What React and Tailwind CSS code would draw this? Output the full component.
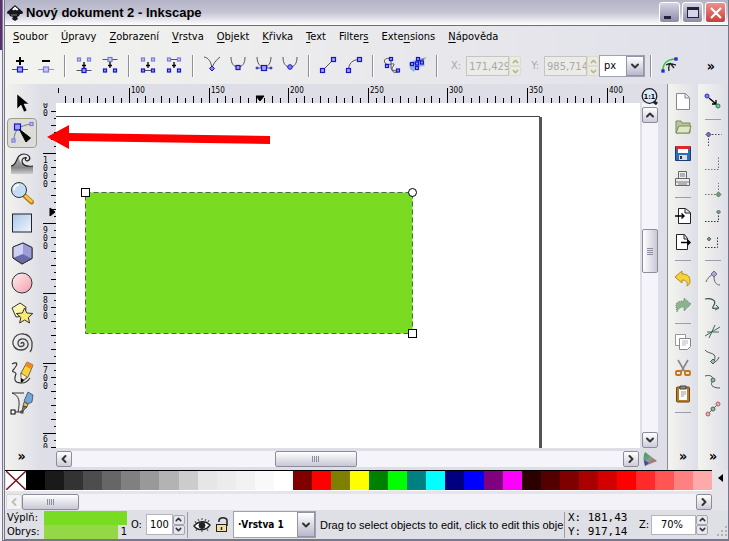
import { ChevronDown, ChevronLeft, ChevronRight, ChevronUp } from "lucide-react";

const menus = [
  ["", "S", "oubor"],
  ["", "Ú", "pravy"],
  ["", "Z", "obrazení"],
  ["", "V", "rstva"],
  ["", "O", "bjekt"],
  ["", "K", "řivka"],
  ["", "T", "ext"],
  ["Filter", "s", ""],
  ["Exte", "n", "sions"],
  ["", "N", "ápověda"],
];

const swatches = [
  "#000000", "#1a1a1a", "#333333", "#4d4d4d", "#666666", "#808080", "#999999",
  "#b3b3b3", "#cccccc", "#e6e6e6", "#ececec", "#f2f2f2", "#f9f9f9", "#ffffff",
  "#800000", "#ff0000", "#808000", "#ffff00", "#008000", "#00ff00", "#008080",
  "#00ffff", "#000080", "#0000ff", "#800080", "#ff00ff", "#2b0000", "#550000",
  "#800000", "#aa0000", "#d40000", "#ff0000", "#ff2a2a", "#ff5555", "#ff8080",
  "#ffaaaa",
];

// 24x24 drawing, one unit per pixel
function Icon({ children }) {
  return (
    <svg viewBox="0 0 24 24" className="size-6 shrink-0" fill="none" stroke="#555" aria-hidden="true">
      {children}
    </svg>
  );
}

function Node({ x, y, s = 4, soft = false }) {
  return (
    <rect
      x={x - s / 2}
      y={y - s / 2}
      width={s}
      height={s}
      fill={soft ? "#c8c8f4" : "#a0a0ff"}
      stroke={soft ? "#7a7ae0" : "#1414c8"}
      strokeWidth="1.2"
    />
  );
}

function DownArrow() {
  return <path d="M12 8v6M10 11.5h4" stroke="#000" strokeWidth="1.3" />;
}

const nodeTools = [
  [
    ["Insert node", <><path d="M4 15.5h16" /><Node x={12} y={15.5} s={5} /><path d="M8 7h8M12 3v8" stroke="#000" strokeWidth="2" /></>],
    ["Delete node", <><path d="M4 15.5h16" stroke="#999" /><Node x={12} y={15.5} s={5} soft /><path d="M8 7h8" stroke="#000" strokeWidth="2" /></>],
  ],
  [
    ["Join nodes", <><Node x={7} y={5.5} s={3} soft /><Node x={17} y={5.5} s={3} soft /><path d="M4.5 16.5h15" /><Node x={12} y={16.5} /><DownArrow /></>],
    ["Break path", <><path d="M4.5 5.5h15" /><Node x={12} y={5.5} soft /><Node x={7} y={16.5} s={3} /><Node x={17} y={16.5} s={3} /><DownArrow /></>],
  ],
  [
    ["Join with segment", <><Node x={7} y={5.5} s={3} soft /><Node x={17} y={5.5} s={3} soft /><path d="M7 16.5h10" /><Node x={7} y={16.5} s={3} /><Node x={17} y={16.5} s={3} /><DownArrow /></>],
    ["Delete segment", <><path d="M7 5.5h10" /><Node x={7} y={5.5} s={3} soft /><Node x={17} y={5.5} s={3} soft /><Node x={7} y={16.5} s={3} /><Node x={17} y={16.5} s={3} /><DownArrow /></>],
  ],
  [
    ["Make corner", <><path d="M4 3c5 1 7 5 8 11c1-4 4-8 8-11" /><path d="M12 12l2.500 2.500-2.500 2.500-2.500-2.500z" fill="#8080ff" stroke="#1414c8" /></>],
    ["Make smooth", <><path d="M5 3c0 7 3 10 7 10s7-3 7-10" /><Node x={12} y={13.5} /></>],
    ["Make symmetric", <><path d="M5 3c0 6 3 10 7 11c4-1 7-5 7-11M5 14h14" /><Node x={12} y={14} s={5} /><circle cx="5" cy="14" r="1" stroke="#1414c8" /><circle cx="19" cy="14" r="1" stroke="#1414c8" /></>],
    ["Make auto-smooth", <><path d="M5 3c0 7 3 10 7 10s7-3 7-10" /><circle cx="12" cy="13" r="2.3" fill="#8080ff" stroke="#1414c8" /></>],
  ],
  [
    ["Make line", <><path d="M6.500 16.500l11-11" /><Node x={6.5} y={16.5} /><Node x={17.5} y={5.5} /></>],
    ["Make curve", <><path d="M6.500 16.500c0-7 4-11 11-11" /><Node x={6.5} y={16.5} /><Node x={17.5} y={5.5} /></>],
  ],
  [
    ["Object to path", <><path d="M11 5c-5-2-8 1-6 4s8 0 9 1-3 3-2 6 4 3 6 2M11 5v9q0 3 7 3" /><Node x={11} y={5} s={3} /><Node x={7} y={12} s={3} /><Node x={18} y={16.5} s={3} /></>],
    ["Stroke to path", <><path d="M3 9l8-4 10-2-5 5 3 4-9 1-2 5-4-3z" fill="#8fb4d8" stroke="none" /><path d="M4 11l14-6" /><Node x={6} y={10} s={3} /><Node x={12} y={5} s={3} /><Node x={16} y={8.5} s={3} /><Node x={11} y={14} s={3} /><Node x={11} y={9.5} s={3} /></>],
  ],
];

const drawTools = [
  ["Select", <path d="M7 3v15l4-4 3 7 3-1.500-3-6.500h5z" fill="#000" stroke="#fff" strokeWidth=".5" />],
  ["Edit nodes", <><path d="M4 19C4 10 9 4 22 3" stroke="#777" /><Node x={3.5} y={19.5} s={3} soft /><Node x={21.5} y={3} s={3} soft /><Node x={7.5} y={6} s={6} /><path d="M9.500 8.500l11 8.500-4.500 4z" fill="#000" stroke="#000" /></>],
  ["Tweak", <><path d="M1 15c4 0 5-6 8-8 1 6 6 9 14 8v8H1z" fill="url(#wave)" stroke="none" /><path d="M1 15c7 0 4-12 13-12 5 0 7 4 5 6-2 2-5 0-3-2M23 15c-7 1-11-1-11-5 0-3 3-4 5-3" stroke="#222" strokeWidth="1.2" /></>],
  ["Zoom", <><path d="M15 15l6.500 6" stroke="#b77a14" strokeWidth="5" strokeLinecap="round" /><path d="M15.500 15l6 5.500" stroke="#f9c64a" strokeWidth="2.5" strokeLinecap="round" /><circle cx="9" cy="9" r="7.5" fill="#c3dcf4" stroke="#333" /><path d="M4 9a5 5 0 0 1 5-5" stroke="#fff" strokeWidth="2" /></>],
  ["Rectangle", <rect x="2.5" y="3" width="19" height="18" fill="url(#sky)" stroke="#223" />],
  ["3D box", <><path d="M3 6l10-4 9 4.500v11L12 23l-9-6z" fill="#a8a8e0" stroke="#333" /><path d="M3 6l10-4v11l-10 4z" fill="#cfcff4" stroke="none" /><path d="M3 17l10-4 9 4.500L12 23z" fill="#6a6aa8" stroke="none" /><path d="M13 2l9 4.500v11L13 13z" fill="#9c9cd8" stroke="none" /><path d="M3 6l10-4 9 4.500v11L12 23l-9-6z" stroke="#333" /></>],
  ["Ellipse", <circle cx="12" cy="12" r="10" fill="url(#pink)" stroke="#333" />],
  ["Star", <><path d="M2 7l8-5 6 4-1 9-9 1z" fill="#fdf6b0" stroke="#333" /><path d="M14.500 7l2.300 5 6 .5-4.500 4 1.300 5.500-5-3-5 3 1.300-5.500-4.500-4 6-.5z" fill="#fbe978" stroke="#333" /></>],
  ["Spiral", <path d="M11 13c0-2 3-2 3 0 0 3-6 4-6-1 0-4 6-6 9-2 3 5-1 9-6 9-6 0-9-5-8-9 1-5 6-8 11-7 6 1 9 7 8 12 0 3-1 5-2 6" stroke="#444" strokeWidth="1.3" />],
  ["Pencil", <><path d="M2 3c6-3 6 0 2 5-4 4 2 2 2 5-3 7 0 9 6 9 4 0 6-2 8-5" stroke="#333" strokeWidth="1.2" /><path d="M11 12l6-11 6 3-5 12-6 5z" fill="#fbd03c" stroke="#333" strokeWidth=".7" /><path d="M17 1l6 3-2 4-6-3z" fill="#ee8a1c" stroke="none" /><path d="M11 12l6 4-6 5z" fill="#fdf2d0" stroke="#333" strokeWidth=".6" /><path d="M11 17l3 2-3 3z" fill="#000" stroke="none" /></>],
  ["Pen", <><path d="M2 2h12M2 2c8 3 8 9 6 19M3 21h9" stroke="#333" /><rect x="1" y="19" width="4" height="4" fill="#fff" stroke="#000" /><rect x="11" y="20" width="2" height="2" fill="#fff" stroke="#000" strokeWidth=".8" /><path d="M18 1l5 3-1 7-4 2-4-3z" fill="#74a8d4" stroke="#334" strokeWidth=".7" /><path d="M14 11l4 2-1 3-4-1z" fill="#e6c04c" stroke="#333" strokeWidth=".7" /><path d="M13 15l4 1-5 5z" fill="#777" stroke="#333" strokeWidth=".7" /></>],
];

const commands = [
  ["New", <path d="M5.500 4.500h9l4 4v12h-13zM14 5v4h4" fill="#fff" stroke="#888" />],
  ["Open", <><path d="M5 6h5l1 2h8v10H5z" fill="#b9c49a" stroke="#7c8a5c" /><path d="M5 18l3-7h12l-2 7z" fill="#dfe6c6" stroke="#7c8a5c" /></>],
  ["Save", <><path d="M4.500 5.500h15v14h-15z" fill="#2f6db4" stroke="#1b3c70" /><path d="M7 6h10v6H7z" fill="#fff" stroke="none" /><path d="M5 5h14v3H5z" fill="#e02828" stroke="none" /><path d="M8 14h8v5H8z" fill="#ddd" stroke="none" /><path d="M9 15h2v3H9z" fill="#235" stroke="none" /></>],
  ["Print", <><path d="M7.500 4.500h8v7h-8zM4.500 11.500h14v7h-14z" fill="#eee" stroke="#666" /><path d="M9 7h5M9 9h5M5 15h13M7 17h9" stroke="#777" /></>],
  null,
  ["Import", <><path d="M7.500 4.500h7l5 4v11h-12zM14 5v4h5" fill="#fff" stroke="#222" /><path d="M4 12h9M10.500 9.500L13 12l-2.500 2.500" stroke="#000" strokeWidth="1.4" /></>],
  ["Export", <><path d="M5.500 4.500h8l3 4v11h-11zM13 5v4h4" fill="#fff" stroke="#222" /><path d="M10 12.500h9M16.500 10l2.500 2.500-2.500 2.500" stroke="#000" strokeWidth="1.4" /></>],
  null,
  ["Undo", <path d="M4 10l7-6v3c6 0 8 3 8 7 0 2-1 4-3 5 1-4-1-6-5-6v3z" fill="#f4d23c" stroke="#b48c10" />],
  ["Redo", <path d="M20 11l-7-6v3c-5 0-8 1-8 5l1 6c2-4 3-5 7-5v4z" fill="#8cb48c" stroke="#688c68" strokeDasharray="1 1" />],
  null,
  ["Copy", <><path d="M4.500 4.500h10v11h-10z" fill="#fff" stroke="#999" /><path d="M8.500 8.500h11v8l-3 3h-8z" fill="#fff" stroke="#888" /><path d="M11 11h6M11 13h6M11 15h4" stroke="#bbb" /></>],
  ["Cut", <><path d="M7 4l7 12M17 4l-7 12" stroke="#888" strokeWidth="1.6" /><rect x="5" y="15" width="5" height="4" rx="1" stroke="#c87414" strokeWidth="1.8" /><rect x="14" y="15" width="5" height="4" rx="1" stroke="#c87414" strokeWidth="1.8" /></>],
  ["Paste", <><rect x="5.5" y="5" width="13" height="15" rx="1" fill="#b87a28" stroke="#6e4610" /><path d="M8 7h8v11H8z" fill="#fff" stroke="none" /><path d="M9 4h6v3H9z" fill="#888" stroke="#444" /><path d="M10 10h5M10 12h5M10 14h3" stroke="#999" /></>],
  null,
];

const dots = { stroke: "#777", strokeDasharray: "1.5 1.5" };

const snaps = [
  ["Enable snapping", <><path d="M8 9l7 6M11 15l4 0v-4" stroke="#000" strokeWidth="1.3" /><circle cx="6" cy="7" r="2" fill="#8080ff" stroke="#2828c8" /><circle cx="17" cy="17" r="2" fill="#7ac8a0" stroke="#28785c" /></>],
  null,
  ["Snap bounding box", <><path d="M7.500 20V8.500h13" {...dots} stroke="#446" /><path d="M7.500 6l2.500 2.500-2.500 2.500L5 8.500z" fill="#77a" stroke="#446" /></>],
  ["Snap box edges", <path d="M4 17.500h13.500V5" {...dots} />],
  ["Snap box corners", <><path d="M4 16.500h13.500V5" {...dots} /><path d="M17.500 14l2.500 2.500-2.500 2.500-2.500-2.500z" fill="#798" stroke="#575" /></>],
  ["Snap edge midpoints", <><path d="M4 17.500h13.500V8" {...dots} stroke="#333" /><path d="M17.500 6l2 2-2 2-2-2z" fill="#798" stroke="#575" /></>],
  ["Snap box centers", <><path d="M4 17.500h12.500V6" {...dots} stroke="#333" /><path d="M8 7l2 2-2 2-2-2z" fill="#798" stroke="#575" /></>],
  null,
  ["Snap nodes", <><path d="M19 18c-4 0-6-3-6-9M5 15c1-3 4-7 8-8" stroke="#666" /><path d="M13 4l3 3-3 3-3-3z" fill="#aac" stroke="#557" strokeWidth=".8" /></>],
  ["Snap to paths", <><path d="M4 6c6-1 12 1 9 6s-1 3 4 3" stroke="#354" strokeWidth="1.2" /><path d="M15 12l3 3-4 2" stroke="#354" /></>],
  ["Snap intersections", <path d="M4 17l15-9M8 19l6-13M6 13h12" stroke="#465" />],
  ["Snap cusp nodes", <><path d="M4 5c4 5 13 1 9 12M18 12c-1 3-3 5-5 5" stroke="#555" /><path d="M12 14l2.500 2.500L12 19l-2.500-2.500z" fill="#9b9" stroke="#465" /></>],
  ["Snap smooth nodes", <><path d="M4 5c7-2 9 2 7 6s2 6 8 6" stroke="#555" /><circle cx="12" cy="9" r="2" fill="#9b9" stroke="#465" /></>],
  ["Snap midpoints", <><path d="M6 18L18 6" stroke="#555" /><circle cx="7" cy="17" r="2" fill="#eaa" stroke="#a66" /><circle cx="17" cy="7" r="2" fill="#eaa" stroke="#a66" /><circle cx="12" cy="12" r="2" fill="#9b9" stroke="#465" /></>],
];

function ToolButton({ label, children, className = "" }) {
  return (
    <button aria-label={label} className={`flex shrink-0 items-center justify-center ${className}`}>
      <Icon>{children}</Icon>
    </button>
  );
}

function VLine() {
  return <span className="mx-[5px] h-[22px] w-[2px] shrink-0 border-r border-l border-r-white border-l-[#8f8f9c]" />;
}

function Spin({ disabled = false }) {
  const tone = disabled ? "border-[#dcdccb] bg-[#ecebdf] text-[#b4b4a0]" : "border-[#a4a4b4] bg-[#e6e6ee] text-[#333]";
  return (
    <span className="flex w-3 shrink-0 flex-col">
      <button aria-label="Increase" disabled={disabled} className={`flex h-[10px] items-center justify-center rounded-xs border ${tone}`}>
        <ChevronUp size={9} strokeWidth={4} />
      </button>
      <button aria-label="Decrease" disabled={disabled} className={`flex h-[10px] items-center justify-center rounded-xs border ${tone}`}>
        <ChevronDown size={9} strokeWidth={4} />
      </button>
    </span>
  );
}

function ScrollButton({ label, icon: Glyph, disabled = false }) {
  return (
    <button
      aria-label={label}
      disabled={disabled}
      className="flex size-4 shrink-0 items-center justify-center rounded-xs border border-[#8c8c9c] bg-linear-to-b from-white to-[#ccccd8] text-[#333] disabled:border-[#d6d6cc] disabled:bg-none disabled:text-[#c0c0b0]"
    >
      <Glyph size={12} strokeWidth={4} />
    </button>
  );
}

function More() {
  return <button aria-label="More" className="shrink-0 text-[14px] leading-4 font-bold">»</button>;
}

function HRuler() {
  const ticks = [];
  for (let i = -8; i < 63; i++) {
    const x = Math.round(73 + i * 7.96) + 0.5;
    const major = i % 10 === 0;
    ticks.push(<path key={i} d={`M${x} ${major ? 4 : i % 2 ? 14 : 12}V19`} />);
  }
  return (
    <svg className="h-[19px] min-w-0 flex-1" stroke="#000" aria-hidden="true">
      <path d="M2.500 4v5" />
      {ticks}
      <path d="M200 12h8l-4 5z" fill="#000" />
      {[100, 150, 200, 250, 300, 350, 400].map((n, i) => (
        <text key={n} x={Math.round(75 + i * 79.6)} y="9" stroke="none" fontSize="8">{n}</text>
      ))}
    </svg>
  );
}

function VRuler() {
  const ticks = [];
  for (let i = -6; i < 43; i++) {
    const y = 50 + i * 7 + 0.5;
    const major = i % 10 === 0;
    ticks.push(<path key={i} d={`M${major ? 5 : i % 2 ? 16 : 13} ${y}H18`} />);
  }
  const labels = [["00", 2], ["1000", 57], ["900", 127], ["800", 197], ["700", 267], ["60", 336]];
  return (
    <svg className="h-full w-[18px] shrink-0" stroke="#000" aria-hidden="true">
      {ticks}
      <path d="M12 105v8l5-4z" fill="#000" />
      {labels.map(([text, top]) =>
        text.split("").map((d, i) => (
          <text
            key={top + i * 8}
            x="5"
            y={top + i * 8}
            dy="3"
            stroke="none"
            fontSize="8"
            className="font-['DejaVu_Sans_Mono',monospace]"
          >
            {d}
          </text>
        ))
      )}
    </svg>
  );
}

function Drawing() {
  return (
    <svg className="h-full min-w-0 flex-1 bg-white" aria-label="Canvas" role="img">
      <path d="M0 13.500h484" stroke="#444" />
      <path d="M484.500 14v400" stroke="#555" strokeWidth="3" />
      <rect x="29.5" y="89.5" width="327" height="141" fill="#7adc22" stroke="#4c6a3c" strokeDasharray="5 3" />
      <rect x="25.5" y="85.5" width="8" height="8" fill="#fff" stroke="#000" />
      <circle cx="356.5" cy="89.5" r="4" fill="#fff" stroke="#000" />
      <rect x="352.5" y="226.5" width="8" height="8" fill="#fff" stroke="#000" />
    </svg>
  );
}

function TitleBar() {
  const button = "flex size-[21px] items-center justify-center rounded-[3px] border border-white";
  return (
    <header className="flex h-[26px] shrink-0 items-center border-b border-[#6c6c7c] bg-linear-to-b from-[#b4b4c8] via-[#c4c4d4] to-white pr-[2px] pl-[2px]">
      <svg viewBox="0 0 16 16" className="size-4" aria-hidden="true">
        <path d="M8 0l8 7c0 2-1 2-3 2l-1 2-2 1 1 2-3 2-3-2 1-2-3-1-1-2C0 9 0 8 0 7z" fill="#16161c" />
        <path d="M8 1.500l3.500 3-1.500 1-2-1-1 1-2-1z" fill="#fff" />
        <path d="M4 10h6" stroke="#889" />
      </svg>
      <h1 className="ml-[3px] font-['Liberation_Sans',sans-serif] text-[13px] leading-4 font-bold">
        Nový dokument 2 - Inkscape
      </h1>
      <div className="ml-auto flex gap-[2px]">
        <button aria-label="Minimize" className={`${button} bg-linear-to-b from-[#d4d4e4] to-[#8c8ca8]`}>
          <span className="mt-[9px] mr-[5px] h-[3px] w-[7px] bg-[#22223a]" />
        </button>
        <button aria-label="Maximize" className={`${button} bg-linear-to-b from-[#d4d4e4] to-[#8c8ca8]`}>
          <span className="h-[11px] w-3 border border-t-[3px] border-[#22223a] bg-[#d4d4e4]" />
        </button>
        <button aria-label="Close" className={`${button} bg-linear-to-b from-[#f09088] to-[#c83c3c]`}>
          <svg viewBox="0 0 12 12" className="size-3" stroke="#fff" strokeWidth="2.2">
            <path d="M1 1l10 10M11 1L1 11" />
          </svg>
        </button>
      </div>
    </header>
  );
}

function NodeToolbar() {
  return (
    <div className="flex h-9 shrink-0 items-center pr-[13px] pl-[2px]">
      {nodeTools.map((group, i) => (
        <div key={i} className="flex shrink-0 items-center">
          {group.map(([label, art]) => (
            <ToolButton key={label} label={label} className="w-[26px]">{art}</ToolButton>
          ))}
          <VLine />
        </div>
      ))}
      <label htmlFor="node-x" className="ml-2 text-[#a8a8a8]">X:</label>
      <input id="node-x" disabled defaultValue="171,429" className="ml-[5px] h-5 w-[43px] border border-[#c4c4c4] bg-[#ebebe8] pl-[2px] text-[#a8a8a8]" />
      <Spin disabled />
      <label htmlFor="node-y" className="ml-[10px] text-[#a8a8a8]">Y:</label>
      <input id="node-y" disabled defaultValue="985,714" className="ml-[5px] h-5 w-[43px] border border-[#c4c4c4] bg-[#ebebe8] pl-[2px] text-[#a8a8a8]" />
      <Spin disabled />
      <Combo label="Unit" value="px" className="h-[22px] w-[46px] shrink-0" />
      <VLine />
      <ToolButton label="Show handles" className="w-[26px]">
        <path d="M5 16C5 9 10 5 18 5" stroke="#2cc83c" strokeWidth="1.6" />
        <path d="M8 11c5-3 8 0 10 0M12 9c-1 3-2 4-1 8M12 9l4 5" stroke="#222" strokeWidth="1.3" />
        <Node x={5} y={17} s={2} />
        <Node x={18} y={5} s={2} />
      </ToolButton>
      <span className="ml-auto flex"><More /></span>
    </div>
  );
}

function Combo({ label, value, className }) {
  return (
    <span className={`relative flex border border-[#a0a0b0] bg-white ${className}`}>
      <select aria-label={label} className="w-full appearance-none bg-transparent pl-1">
        <option>{value}</option>
      </select>
      <span className="pointer-events-none absolute inset-y-0 right-0 flex w-[18px] items-center justify-center border border-[#9494a8] bg-linear-to-b from-white to-[#b8b8cc]">
        <ChevronDown size={12} strokeWidth={4} color="#333" />
      </span>
    </span>
  );
}

function SideBar({ items, label }) {
  return (
    <nav aria-label={label} className="flex w-[30px] shrink-0 flex-col items-center bg-linear-to-r from-[#f4f4ee] to-[#dedee8] pt-1 pb-[6px]">
      {items.map((item, i) =>
        item ? (
          <ToolButton key={i} label={item[0]} className="h-[26px]">{item[1]}</ToolButton>
        ) : (
          <span key={i} className="my-[5px] h-px w-4 shrink-0 bg-[#9c9ca8]" />
        )
      )}
      <span className="mt-auto flex"><More /></span>
    </nav>
  );
}

function Workspace() {
  return (
    <main className="relative flex min-h-0 flex-1">
      <nav aria-label="Tools" className="flex w-[33px] shrink-0 flex-col items-center bg-linear-to-r from-[#f2f2ee] to-[#e0e0e8] pt-1 pb-[6px]">
        {drawTools.map(([label, art], i) => (
          <ToolButton
            key={label}
            label={label}
            className={i === 1 ? "h-[30px] w-[30px] rounded-sm border border-[#a09c88] bg-[#dcdcd8]" : "h-[30px]"}
          >
            {art}
          </ToolButton>
        ))}
        <span className="mt-auto flex"><More /></span>
      </nav>

      <div className="flex min-w-0 flex-1 flex-col bg-[#dedee6]">
        <div className="flex shrink-0 pl-[18px]">
          <HRuler />
          <button aria-label="Zoom 1:1" className="relative h-[19px] w-[28px] shrink-0">
            <svg viewBox="0 0 18 18" className="absolute top-1 left-[2px] size-[18px]">
              <path d="M12 13l4 3" stroke="#222" strokeWidth="3" />
              <circle cx="8.5" cy="8" r="7.3" fill="#dcebfa" stroke="#222" strokeWidth="1.3" />
              <text x="8.5" y="11" textAnchor="middle" fontSize="7" fontWeight="bold">1:1</text>
            </svg>
          </button>
        </div>
        <div className="flex min-h-0 flex-1">
          <VRuler />
          <Drawing />
          <div className="mr-[9px] ml-[2px] flex w-4 shrink-0 flex-col bg-[#f4f4fa] pt-1">
            <ScrollButton label="Scroll up" icon={ChevronUp} />
            <div className="flex flex-1 flex-col pt-[106px]">
              <span className="flex h-11 flex-col items-center justify-center gap-px rounded-xs border border-[#8c8c9c] bg-linear-to-r from-white to-[#c8c8d6]">
                {[0, 1, 2, 3].map((n) => <i key={n} className="h-px w-[6px] bg-[#8c8c9c]" />)}
              </span>
            </div>
            <ScrollButton label="Scroll down" icon={ChevronDown} />
          </div>
        </div>
        <div className="flex h-[22px] shrink-0 items-center pl-[18px]">
          <div className="flex h-4 min-w-0 flex-1 bg-[#f4f4fa]">
            <ScrollButton label="Scroll left" icon={ChevronLeft} />
            <div className="flex flex-1 justify-center pr-16">
              <span className="flex w-[82px] items-center justify-center gap-px rounded-xs border border-[#8c8c9c] bg-linear-to-b from-white to-[#c8c8d6]">
                {[0, 1, 2, 3].map((n) => <i key={n} className="h-[6px] w-px bg-[#8c8c9c]" />)}
              </span>
            </div>
            <ScrollButton label="Scroll right" icon={ChevronRight} />
          </div>
          <button aria-label="Color management" className="w-[28px] pl-1">
            <svg viewBox="0 0 14 14" className="size-[14px]">
              <defs>
                <linearGradient id="gamut" x1="0" y1="0" x2="1" y2="1">
                  <stop offset="0" stopColor="#2ca04c" />
                  <stop offset=".5" stopColor="#8c9c8c" />
                  <stop offset="1" stopColor="#c83c4c" />
                </linearGradient>
              </defs>
              <path d="M2 0l12 9-12 5C0 9 0 4 2 0z" fill="url(#gamut)" />
              <path d="M1 8l5 3-4 3z" fill="#4444bc" />
            </svg>
          </button>
        </div>
      </div>

      <div className="flex shrink-0 border-l border-[#8c8c9c]">
        <SideBar label="Commands" items={commands} />
        <SideBar label="Snapping" items={snaps} />
      </div>

      {/* callout pointing at the node tool */}
      <svg viewBox="0 0 224 26" className="pointer-events-none absolute top-10 left-[42px] h-[26px] w-[224px]" aria-hidden="true">
        <path d="M0 13L22 1v8l201 3v8L22 17v8z" fill="#fe0000" />
      </svg>
    </main>
  );
}

function Palette() {
  return (
    <section aria-label="Palette" className="flex shrink-0 bg-[#e4e4ea]">
      <div className="min-w-0 flex-1">
        <div className="flex h-[21px] border-t border-b border-t-black border-b-white pl-px">
          <button aria-label="None" className="w-5 shrink-0 bg-white">
            <svg viewBox="0 0 20 19" className="h-[19px] w-5" stroke="#7c1420" strokeWidth="1.5">
              <path d="M0 0l20 19M20 0L0 19" />
            </svg>
          </button>
          {swatches.map((color, i) => (
            <button key={i} aria-label={color} className="flex-1" style={{ backgroundColor: color }} />
          ))}
        </div>
        <div className="mt-[3px] flex h-4 bg-[#f2f2f8] pl-px">
          <ScrollButton label="Previous colors" icon={ChevronLeft} disabled />
          <span className="flex w-[57px] items-center justify-center gap-px rounded-xs border border-[#8c8c9c] bg-linear-to-b from-white to-[#c8c8d6]">
            {[0, 1, 2, 3].map((n) => <i key={n} className="h-[6px] w-px bg-[#8c8c9c]" />)}
          </span>
          <span className="ml-auto flex"><ScrollButton label="Next colors" icon={ChevronRight} /></span>
        </div>
      </div>
      <button aria-label="Palette menu" className="flex w-4 items-start justify-center pt-1">
        <svg viewBox="0 0 5 8" className="h-2 w-[5px]"><path d="M5 0v8L0 4z" /></svg>
      </button>
    </section>
  );
}

function StatusBar() {
  return (
    <footer className="flex h-[29px] shrink-0 items-center bg-[#dfdfe6] pl-[2px]">
      <div className="grid shrink-0 grid-cols-[37px_83px]">
        <span>Výplň:</span>
        <span className="bg-[#7adc22]" />
        <span>Obrys:</span>
        <span className="flex justify-end bg-linear-to-r from-[#94d848] from-[74px] to-transparent to-[74px]">1</span>
      </div>
      <label htmlFor="opacity" className="ml-1">O:</label>
      <input id="opacity" defaultValue="100" className="ml-1 h-[21px] w-[27px] border border-[#b4b4c0] bg-white pl-[3px]" />
      <Spin />
      <span className="ml-[2px] h-[26px] w-px shrink-0 bg-[#9c9ca8]" />
      <button aria-label="Toggle layer visibility" className="ml-[5px] shrink-0">
        <svg viewBox="0 0 18 16" className="h-4 w-[18px]" fill="none" stroke="#222">
          <path d="M1 9c4-5 11-6 16-1-4 6-12 6-16 1z" fill="#fff" strokeWidth="1.4" />
          <circle cx="9" cy="8.5" r="3" fill="#222" />
          <path d="M3 6L2 4M6 4L5 2M9 3V1M12 4l1-2M15 5l1-2M4 12l-1 2M9 13v2M14 12l1 2" strokeWidth=".8" />
        </svg>
      </button>
      <button aria-label="Lock layer" className="ml-1 shrink-0">
        <svg viewBox="0 0 14 16" className="h-4 w-[14px]" fill="none" stroke="#222">
          <path d="M4 5V3c1-3 7-3 8 0v6" strokeWidth="1.5" />
          <rect x="1.5" y="7.5" width="10" height="7" fill="#f2e0a0" />
          <path d="M6.500 10v3" strokeWidth="1.5" />
        </svg>
      </button>
      <Combo label="Layer" value="·Vrstva 1" className="ml-1 h-[27px] w-[83px] shrink-0 text-[10px] font-bold" />
      <p className="ml-1 min-w-0 flex-1 overflow-hidden font-['Liberation_Sans',sans-serif] whitespace-nowrap">
        Drag to select objects to edit, click to edit this obje.
      </p>
      <span className="h-[26px] w-px shrink-0 bg-[#9c9ca8]" />
      <pre className="ml-[3px] w-[62px] shrink-0 font-['DejaVu_Sans_Mono',monospace]">
        {"X: 181,43\nY: 917,14"}
      </pre>
      <label htmlFor="zoom" className="ml-[9px]">Z:</label>
      <input id="zoom" defaultValue="70%" className="ml-[2px] h-5 w-[45px] border border-[#b4b4c0] bg-white pl-[9px]" />
      <Spin />
      <svg viewBox="0 0 12 12" className="mt-3 ml-2 size-3 shrink-0" fill="#b4b4a8" aria-hidden="true">
        <path d="M9 1h2v2H9zM9 5h2v2H9zM9 9h2v2H9zM5 5h2v2H5zM5 9h2v2H5zM1 9h2v2H1z" />
      </svg>
    </footer>
  );
}

export default function App() {
  return (
    <div className="flex h-screen bg-[#f4f4fa] font-['DejaVu_Sans_Condensed','DejaVu_Sans',sans-serif] text-[11px] leading-[14px] text-black">
      <svg className="absolute size-0" aria-hidden="true">
        <defs>
          <linearGradient id="sky" x1="0" y1="0" x2="1" y2="1">
            <stop offset="0" stopColor="#a8c8e8" />
            <stop offset="1" stopColor="#f0f6fc" />
          </linearGradient>
          <linearGradient id="pink" x1="0" y1="0" x2="1" y2="1">
            <stop offset="0" stopColor="#fff0f2" />
            <stop offset="1" stopColor="#f49cac" />
          </linearGradient>
          <linearGradient id="wave" x1="0" y1="0" x2="0" y2="1">
            <stop offset="0" stopColor="#aaa" />
            <stop offset=".6" stopColor="#888" />
            <stop offset="1" stopColor="#ccc" />
          </linearGradient>
        </defs>
      </svg>
      <div className="w-[2px] shrink-0 bg-linear-to-b from-[#58306c] from-[50px] to-[#f0f0f6] to-[50px]" />
      <div className="flex min-w-0 flex-1 flex-col border-r border-b-2 border-l-[3px] border-double border-[#77778c] bg-linear-to-r from-[#f3f3ef] to-[#e0e0ea]">
        <TitleBar />
        <nav aria-label="Menu" className="flex h-[22px] shrink-0 items-center gap-[13px] px-2">
          {menus.map(([before, key, after]) => (
            <button key={key + after}>
              {before}
              <u className="underline-offset-2">{key}</u>
              {after}
            </button>
          ))}
        </nav>
        <NodeToolbar />
        <Workspace />
        <Palette />
        <StatusBar />
      </div>
    </div>
  );
}
